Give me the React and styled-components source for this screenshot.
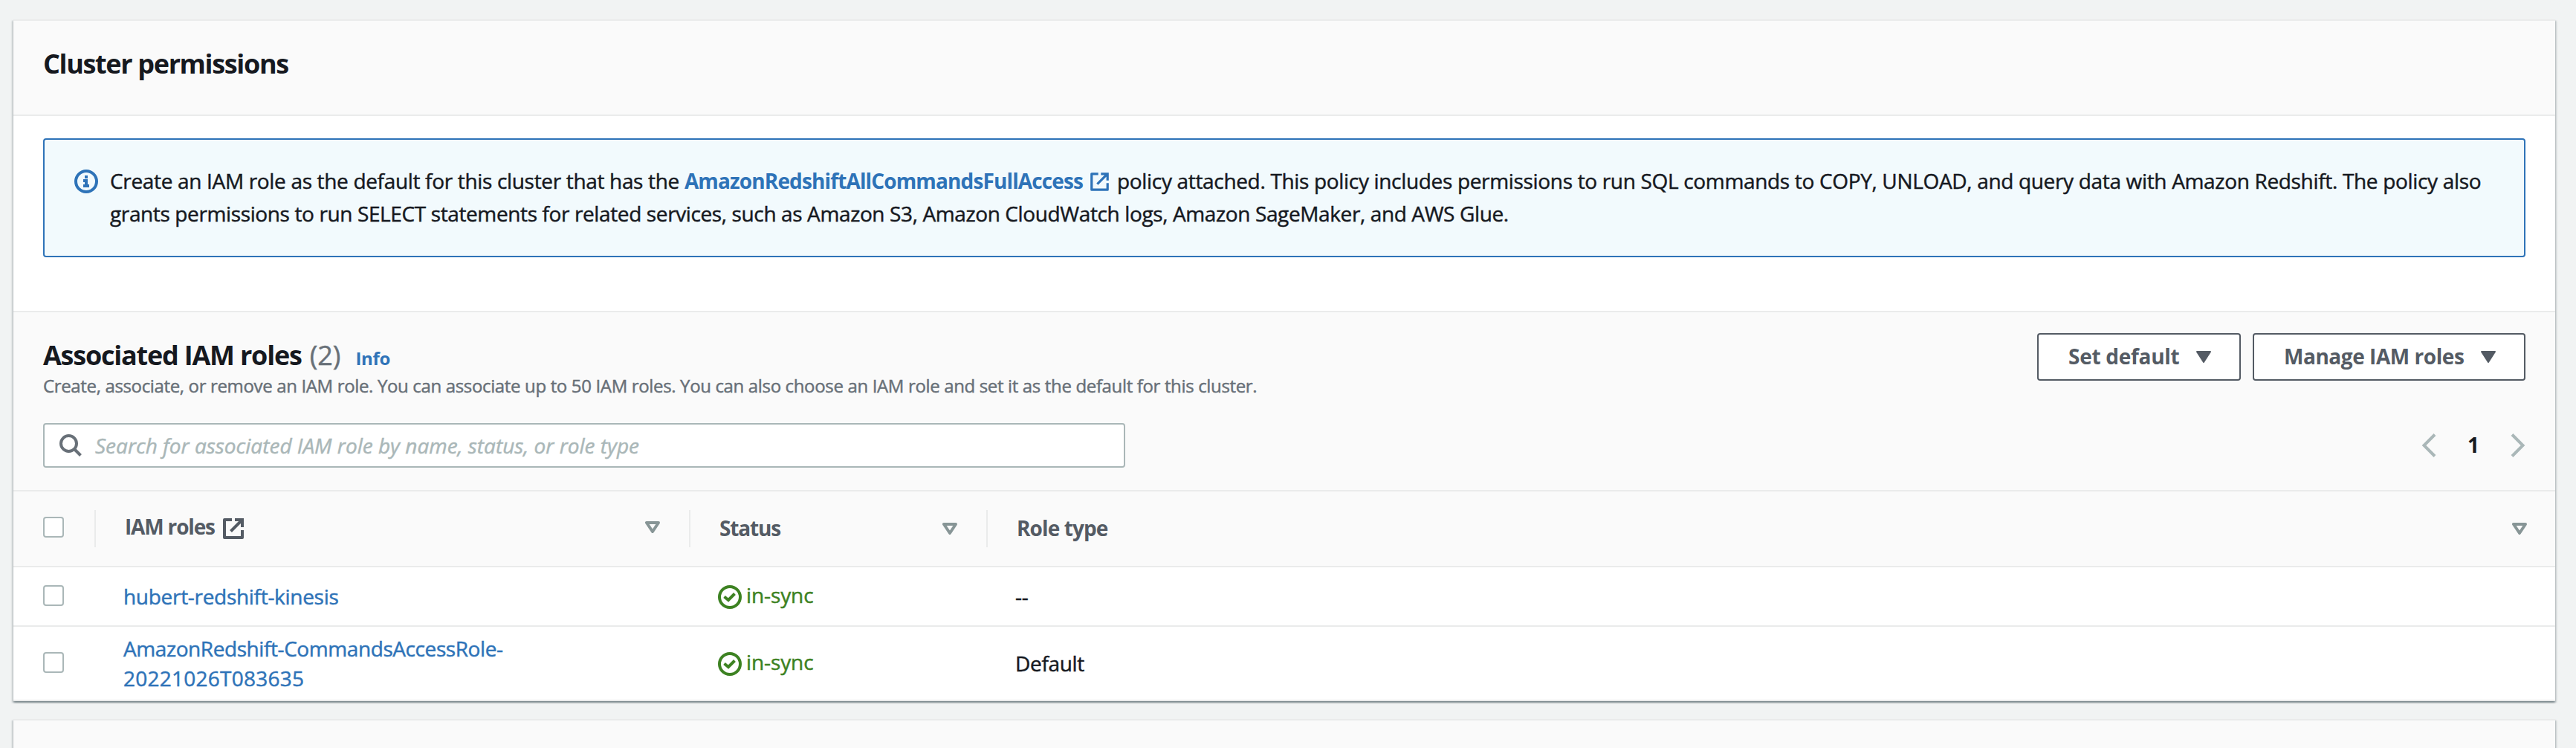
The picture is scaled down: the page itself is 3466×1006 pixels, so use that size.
import React from "react";
import styled, { createGlobalStyle } from "styled-components";

const color = {
  page: "#f1f3f3",
  panel: "#ffffff",
  header: "#fafafa",
  line: "#eaebeb",
  text: "#16191f",
  strong: "#545b64",
  muted: "#687078",
  link: "#2e73b8",
  field: "#aab7b8",
  sort: "#879596",
  success: "#3d8222",
  alert: "#f2fafd",
};

const GlobalStyle = createGlobalStyle`
  *, *::before, *::after { box-sizing: border-box; }
  body {
    margin: 0;
    background: ${color.page};
    color: ${color.text};
    font-family: "Open Sans", "Noto Sans", sans-serif;
    font-size: 28px;
    line-height: 40px;
    overflow: hidden;
    -webkit-text-stroke: 0.45px;
  }
  svg { display: block; flex: none; }
`;

const Page = styled.main`
  display: flex;
  flex-direction: column;
  gap: 24px;
  height: 1006px;
  padding: 26px 28px 0 18px;
  overflow: hidden;
`;

const Panel = styled.section`
  flex: none;
  min-height: ${(p) => p.$minHeight || 0}px;
  background: ${(p) => (p.$shaded ? color.header : color.panel)};
  border-top: 2px solid ${color.line};
  box-shadow: 0 2px 2px 0 rgba(0, 28, 36, 0.3),
    2px 2px 2px 0 rgba(0, 28, 36, 0.15),
    -2px 2px 2px 0 rgba(0, 28, 36, 0.15);
`;

const PanelHeader = styled.header`
  height: 128px;
  padding: 35px 40px 0;
  background: ${color.header};
  border-bottom: 2px solid ${color.line};
`;

const Title = styled.h2`
  margin: 0;
  font-size: 36px;
  font-weight: 700;
  line-height: 45px;
  letter-spacing: ${(p) => p.$tracking}px;
  white-space: nowrap;
  -webkit-text-stroke: 0;
`;

const PanelBody = styled.div`
  height: 262px;
  padding: 30px 40px 0;
`;

const Alert = styled.div`
  display: flex;
  gap: 16px;
  height: 160px;
  padding: 33px 38px 0 40px;
  background: ${color.alert};
  border: 2px solid ${color.link};
  border-radius: 4px;
`;

const AlertIcon = styled.span`
  padding-top: 7px;
`;

const AlertText = styled.p`
  margin: 0;
  line-height: 44px;
  white-space: nowrap;
`;

const AlertLine = styled.span`
  display: block;
  letter-spacing: ${(p) => p.$tracking}px;
`;

const Link = styled.a`
  color: ${color.link};
  letter-spacing: ${(p) => p.$tracking}px;
  font-weight: ${(p) => (p.$bold ? 700 : 400)};
  -webkit-text-stroke: ${(p) => (p.$bold ? 0 : 0.45)}px;
  text-decoration: none;

  svg {
    display: inline-block;
    margin: 0 4px 0 10px;
    vertical-align: -3px;
  }
`;

const RolesHeader = styled.header`
  height: 243px;
  padding: 28px 40px 0;
  background: ${color.header};
  border-top: 2px solid ${color.line};
  border-bottom: 2px solid ${color.line};
`;

const HeaderRow = styled.div`
  display: flex;
  justify-content: space-between;
  align-items: flex-start;
`;

const HeadingBlock = styled.div`
  padding-top: 7px;
`;

const TitleRow = styled.div`
  display: flex;
  align-items: baseline;
`;

const Counter = styled.span`
  margin-left: 11px;
  color: ${color.muted};
  font-size: 36px;
  line-height: 45px;
`;

const InfoLink = styled.a`
  margin-left: 20px;
  color: ${color.link};
  font-size: 24px;
  font-weight: 700;
  line-height: 33px;
  letter-spacing: -0.3px;
  -webkit-text-stroke: 0;
`;

const Description = styled.p`
  margin: 2px 0 0;
  color: ${color.muted};
  font-size: 24px;
  line-height: 33px;
  letter-spacing: -0.35px;
  white-space: nowrap;
`;

const Actions = styled.div`
  display: flex;
  gap: 16px;
`;

const Button = styled.button`
  display: flex;
  align-items: center;
  justify-content: space-between;
  width: ${(p) => p.$width}px;
  height: 64px;
  padding: 0 38px 0 40px;
  background: #ffffff;
  border: 2px solid ${color.strong};
  border-radius: 4px;
  color: ${color.strong};
  font: inherit;
  font-weight: 700;
  letter-spacing: ${(p) => p.$tracking}px;
  white-space: nowrap;
  -webkit-text-stroke: 0;
`;

const ButtonLabel = styled.span`
  padding-bottom: 2px;
`;

const FilterRow = styled.div`
  display: flex;
  justify-content: space-between;
  margin-top: 34px;
`;

const SearchBox = styled.div`
  display: flex;
  align-items: center;
  gap: 18px;
  width: 1456px;
  height: 60px;
  padding-left: 20px;
  background: #ffffff;
  border: 2px solid ${color.field};
  border-radius: 4px;
`;

const Placeholder = styled.span`
  color: ${color.field};
  font-style: italic;
`;

const Pagination = styled.nav`
  display: flex;
  align-items: center;
  height: 60px;
`;

const PageNumber = styled.span`
  width: 100px;
  padding: 0 0 2px;
  text-align: center;
  font-weight: 700;
  -webkit-text-stroke: 0;
`;

const Row = styled.div`
  display: grid;
  grid-template-columns: 111px 800px 400px 1fr;
  align-items: center;
  height: ${(p) => p.$height}px;
  background: ${(p) => (p.$head ? color.header : "transparent")};
  border-bottom: 2px solid ${color.line};
`;

const HeadCell = styled.div`
  display: flex;
  align-items: center;
  justify-content: space-between;
  height: 50px;
  padding: 0 ${(p) => (p.$last ? 38 : 39)}px ${(p) => p.$lift || 0}px 39px;
  border-right: ${(p) => (p.$last ? 0 : 2)}px solid ${color.line};
  color: ${color.strong};
  font-weight: 700;
  -webkit-text-stroke: 0;
`;

const HeadLabel = styled.span`
  display: flex;
  align-items: center;
  gap: 11px;
  padding-bottom: 2px;
  letter-spacing: ${(p) => p.$tracking}px;
  white-space: nowrap;

  svg {
    margin-top: 5px;
  }
`;

const SelectCell = styled.div`
  display: flex;
  align-items: center;
  height: 50px;
  padding: 0 0 ${(p) => (p.$divider ? 4 : 2)}px 40px;
  border-right: ${(p) => (p.$divider ? 2 : 0)}px solid ${color.line};
`;

const Checkbox = styled.span`
  width: 28px;
  height: 28px;
  background: #ffffff;
  border: 2px solid ${color.field};
  border-radius: 4px;
`;

const Cell = styled.div`
  padding-left: 37px;
  letter-spacing: -0.33px;
`;

const Status = styled.span`
  display: flex;
  align-items: center;
  gap: 6px;
  color: ${color.success};
  letter-spacing: -0.1px;

  svg {
    margin-top: 2px;
  }
`;

const StatusLabel = styled.span`
  padding-bottom: 4px;
`;

const InfoIcon = () => (
  <svg width="32" height="32" viewBox="0 0 32 32" fill="none">
    <circle cx="16" cy="16" r="14" stroke={color.link} strokeWidth="4" />
    <path d="M14 8h4v4h-4zM12 13h6v7h2v4h-8v-4h2v-3h-2z" fill={color.link} />
  </svg>
);

const ExternalIcon = ({ size, tone, weight = 4 }) => (
  <svg width={size} height={size} viewBox="0 0 28 28" fill="none" stroke={tone} strokeWidth={weight}>
    <path d="M12 2H2v24h24V16" strokeLinejoin="round" />
    <path d="M16 2h10v10M25.5 2.5L10.5 17.5" />
  </svg>
);

const CaretIcon = () => (
  <svg width="20" height="16" viewBox="0 0 20 16">
    <path d="M1 1h18l-9 14z" fill={color.strong} stroke={color.strong} strokeWidth="2" strokeLinejoin="round" />
  </svg>
);

const SortIcon = () => (
  <svg width="20" height="16" viewBox="0 0 20 16" fill="none">
    <path d="M2 2h16l-8 12z" stroke={color.sort} strokeWidth="4" strokeLinejoin="round" />
  </svg>
);

const SearchIcon = () => (
  <svg width="30" height="30" viewBox="0 0 30 30" fill="none" stroke={color.muted} strokeWidth="4">
    <circle cx="12.5" cy="12.5" r="10.5" />
    <path d="M20 20l8.5 8.5" />
  </svg>
);

const ChevronIcon = ({ flip }) => (
  <svg width="20" height="32" viewBox="0 0 20 32" fill="none" stroke={color.field} strokeWidth="4">
    <path d={flip ? "M2 1.5L16.5 16L2 30.5" : "M18 1.5L3.5 16L18 30.5"} />
  </svg>
);

const CheckIcon = () => (
  <svg width="32" height="32" viewBox="0 0 32 32" fill="none" stroke={color.success} strokeWidth="4">
    <circle cx="16" cy="16" r="14" />
    <path d="M8.5 15.5l5.5 4.5 8.5-8.5" />
  </svg>
);

const columns = [
  { label: "IAM roles", tracking: -1.16, external: true, lift: 4 },
  { label: "Status", tracking: -1.15 },
  { label: "Role type", tracking: -0.9 },
];

const roles = [
  { name: [["hubert-redshift-kinesis", -0.3]], type: "--", height: 80 },
  {
    name: [
      ["AmazonRedshift-CommandsAccessRole-", -0.42],
      ["20221026T083635", 0.25],
    ],
    type: "Default",
    height: 100,
  },
];

export default function App() {
  return (
    <Page>
      <GlobalStyle />
      <Panel>
        <PanelHeader>
          <Title $tracking={-1.35}>Cluster permissions</Title>
        </PanelHeader>
        <PanelBody>
          <Alert>
            <AlertIcon>
              <InfoIcon />
            </AlertIcon>
            <AlertText>
              <AlertLine $tracking={-0.33}>
                Create an IAM role as the default for this cluster that has the{" "}
                <Link $bold $tracking={-0.87}>
                  AmazonRedshiftAllCommandsFullAccess
                  <ExternalIcon size={25} tone={color.link} weight={3.6} />
                </Link>{" "}
                policy attached. This policy includes permissions to run SQL commands to COPY,
                UNLOAD, and query data with Amazon Redshift. The policy also
              </AlertLine>
              <AlertLine $tracking={-0.38}>
                grants permissions to run SELECT statements for related services, such as Amazon S3,
                Amazon CloudWatch logs, Amazon SageMaker, and AWS Glue.
              </AlertLine>
            </AlertText>
          </Alert>
        </PanelBody>
        <RolesHeader>
          <HeaderRow>
            <HeadingBlock>
              <TitleRow>
                <Title $tracking={-1.22}>Associated IAM roles</Title>
                <Counter>(2)</Counter>
                <InfoLink>Info</InfoLink>
              </TitleRow>
              <Description>
                Create, associate, or remove an IAM role. You can associate up to 50 IAM roles. You
                can also choose an IAM role and set it as the default for this cluster.
              </Description>
            </HeadingBlock>
            <Actions>
              <Button $width={274} $tracking={-0.28}>
                <ButtonLabel>Set default</ButtonLabel>
                <CaretIcon />
              </Button>
              <Button $width={367} $tracking={-0.45}>
                <ButtonLabel>Manage IAM roles</ButtonLabel>
                <CaretIcon />
              </Button>
            </Actions>
          </HeaderRow>
          <FilterRow>
            <SearchBox>
              <SearchIcon />
              <Placeholder>Search for associated IAM role by name, status, or role type</Placeholder>
            </SearchBox>
            <Pagination>
              <ChevronIcon />
              <PageNumber>1</PageNumber>
              <ChevronIcon flip />
            </Pagination>
          </FilterRow>
        </RolesHeader>
        <Row $head $height={102}>
          <SelectCell $divider>
            <Checkbox />
          </SelectCell>
          {columns.map((c, i) => (
            <HeadCell key={c.label} $last={i === columns.length - 1} $lift={c.lift}>
              <HeadLabel $tracking={c.tracking}>
                {c.label}
                {c.external && <ExternalIcon size={28} tone={color.strong} />}
              </HeadLabel>
              <SortIcon />
            </HeadCell>
          ))}
        </Row>
        {roles.map((r) => (
          <Row key={r.type} $height={r.height}>
            <SelectCell>
              <Checkbox />
            </SelectCell>
            <Cell>
              {r.name.map(([part, tracking]) => (
                <div key={part}>
                  <Link $tracking={tracking}>{part}</Link>
                </div>
              ))}
            </Cell>
            <Cell>
              <Status>
                <CheckIcon />
                <StatusLabel>in-sync</StatusLabel>
              </Status>
            </Cell>
            <Cell>{r.type}</Cell>
          </Row>
        ))}
      </Panel>
      <Panel $shaded $minHeight={60} />
    </Page>
  );
}
